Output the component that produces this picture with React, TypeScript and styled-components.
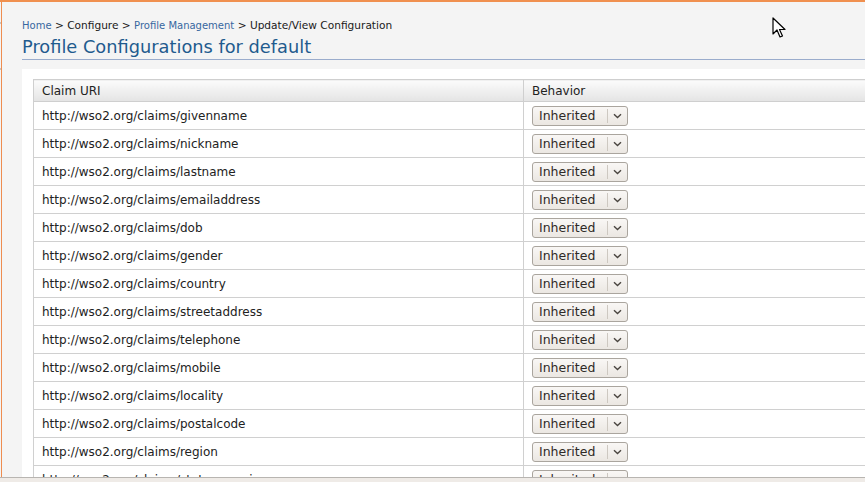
import React from "react";
import styled, { createGlobalStyle } from "styled-components";

const GlobalStyle = createGlobalStyle`
  html, body { margin: 0; padding: 0; overflow: hidden; background: #f4f4f4; }
  body { font-family: "DejaVu Sans", Verdana, sans-serif; color: #222; }
`;

const Frame = styled.div`
  width: 865px;
  height: 482px;
  display: flex;
  flex-direction: column;
  border-top: 2px solid #f0904f;
  box-sizing: border-box;
  position: relative;
  overflow: hidden;
`;

const Body = styled.div`
  flex: 1;
  display: flex;
  min-height: 0;
`;

const LeftStrip = styled.div`
  width: 1px;
  background: linear-gradient(#f4f4f4 0 20px, #c9c6c2 20px 22px, #f4f4f4 22px 66px, #c9c6c2 66px 68px, #f4f4f4 68px);
  border-right: 1px solid #ee8d50;
`;

const Main = styled.div`
  flex: 1;
  min-width: 0;
  display: flex;
  flex-direction: column;
  padding-left: 20px;
`;

const Breadcrumb = styled.div`
  margin-top: 16px;
  height: 14px;
  font-size: 10.6px;
  line-height: 14px;
  white-space: nowrap;
  color: #1a1a1a;
`;

const Crumb = styled.a`
  color: #3767a0;
  font-size: 10px;
  text-decoration: none;
`;

const Title = styled.h1`
  margin: 4px 0 0;
  font-weight: normal;
  font-size: 17.8px;
  line-height: 22px;
  color: #1f5b8e;
  padding-bottom: 1px;
  border-bottom: 1px solid #9aaccc;
  white-space: nowrap;
`;

const Panel = styled.div`
  margin-top: 9px;
  flex: 1;
  min-height: 0;
  background: #fff;
  padding: 10px 0 0 11px;
  overflow: hidden;
`;

const Table = styled.table`
  border-collapse: collapse;
  width: 1100px;
  table-layout: fixed;
  font-size: 12px;
`;

const HeadCell = styled.th<{ $w?: number }>`
  width: ${(p) => (p.$w ? `${p.$w}px` : "auto")};
  height: 21px;
  padding: 0 8px;
  text-align: left;
  font-weight: normal;
  color: #222;
  border: 1px solid #cfcfcf;
  background: linear-gradient(#fbfbfb, #e4e4e4);
`;

const Cell = styled.td`
  height: 27px;
  padding: 0 8px;
  border: 1px solid #d0d0d0;
  color: #222;
  white-space: nowrap;
  overflow: hidden;
`;

const Select = styled.div`
  display: inline-flex;
  align-items: stretch;
  width: 96px;
  height: 20px;
  box-sizing: border-box;
  border: 1px solid #aaa59e;
  border-radius: 3px;
  background: linear-gradient(#f9f7f5, #ebe7e2);
  vertical-align: middle;
  font-size: 12.5px;
  color: #2e2a26;
`;

const SelectLabel = styled.span`
  flex: 1;
  padding-left: 6px;
  line-height: 18px;
`;

const SelectArrow = styled.span`
  width: 19px;
  display: flex;
  align-items: center;
  justify-content: center;
  border-left: 1px solid #cdc8c1;
  margin: 2px 0;
`;

const BottomBar = styled.div`
  height: 4px;
  border-top: 1px solid #b8b5b1;
  background: #efebe7;
`;

const Cursor = styled.svg`
  position: absolute;
  left: 772px;
  top: 15px;
`;

const claims = [
  "givenname",
  "nickname",
  "lastname",
  "emailaddress",
  "dob",
  "gender",
  "country",
  "streetaddress",
  "telephone",
  "mobile",
  "locality",
  "postalcode",
  "region",
  "stateorprovince",
];

const Chevron = () => (
  <svg width="9" height="6" viewBox="0 0 9 6">
    <path d="M1 1.2 L4.5 4.5 L8 1.2" fill="none" stroke="#4a4540" strokeWidth="1.4" />
  </svg>
);

export default function App() {
  return (
    <>
      <GlobalStyle />
      <Frame>
        <Body>
          <LeftStrip />
          <Main>
            <Breadcrumb>
              <Crumb>Home</Crumb> &gt; Configure &gt; <Crumb>Profile Management</Crumb> &gt; Update/View Configuration
            </Breadcrumb>
            <Title>Profile Configurations for default</Title>
            <Panel>
              <Table>
                <thead>
                  <tr>
                    <HeadCell $w={473}>Claim URI</HeadCell>
                    <HeadCell>Behavior</HeadCell>
                  </tr>
                </thead>
                <tbody>
                  {claims.map((c) => (
                    <tr key={c}>
                      <Cell>http://wso2.org/claims/{c}</Cell>
                      <Cell>
                        <Select>
                          <SelectLabel>Inherited</SelectLabel>
                          <SelectArrow>
                            <Chevron />
                          </SelectArrow>
                        </Select>
                      </Cell>
                    </tr>
                  ))}
                </tbody>
              </Table>
            </Panel>
          </Main>
        </Body>
        <BottomBar />
        <Cursor width="14" height="22" viewBox="0 0 14 22">
          <path d="M1 1 L1 17 L5 13 L8 20 L10.5 19 L7.5 12.5 L13 12.5 Z" fill="#fff" stroke="#000" strokeWidth="1.2" strokeLinejoin="round" />
        </Cursor>
      </Frame>
    </>
  );
}
